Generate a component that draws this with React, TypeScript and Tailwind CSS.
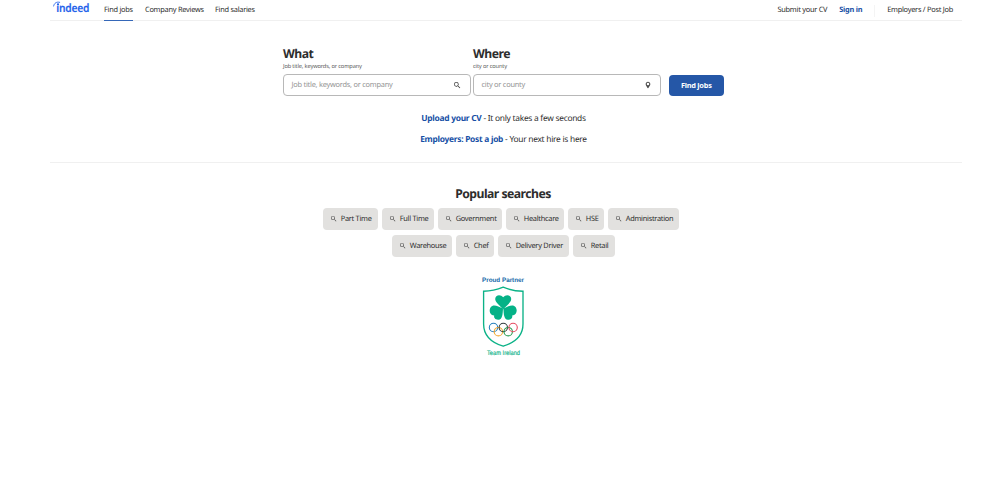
import React from "react";

function SearchIcon({ className }: { className: string }) {
  return (
    <svg viewBox="0 0 24 24" className={className} fill="currentColor" aria-hidden="true">
      <path d="M15.5 14h-.79l-.28-.27A6.47 6.47 0 0 0 16 9.5 6.5 6.5 0 1 0 9.5 16c1.61 0 3.09-.59 4.23-1.57l.27.28v.79l5 4.99L20.49 19zm-6 0C7.01 14 5 11.99 5 9.5S7.01 5 9.5 5 14 7.01 14 9.5 11.99 14 9.5 14" />
    </svg>
  );
}

function PinIcon() {
  return (
    <svg viewBox="0 0 24 24" className="size-[8px] text-[#4d4d4d]" fill="currentColor" aria-hidden="true">
      <path fillRule="evenodd" d="M12 2C8 2 5 5 5 9c0 5 7 13 7 13s7-8 7-13c0-4-3-7-7-7m0 3.2a3.800 3.800 0 1 1 0 7.600a3.800 3.800 0 0 1 0-7.600" />
    </svg>
  );
}

function Logo() {
  return (
    <svg viewBox="0 0 40 18" className="h-[18px] w-[40px] overflow-visible" role="img" aria-label="indeed">
      <path d="M.6 6C1.200 3.200 3.500 1.400 6.700 2.300" fill="none" stroke="#2563eb" strokeWidth="0.900" strokeLinecap="round" />
      <circle cx="5" cy="4.300" r="1.150" fill="#2563eb" />
      <text x="3.300" y="12.400" fontFamily="'Noto Sans', sans-serif" fontWeight="600" fontSize="11.400" textLength="32.800" lengthAdjust="spacingAndGlyphs" fill="#2563eb" stroke="#2563eb" strokeWidth="0.150">ındeed</text>
    </svg>
  );
}

function PartnerBadge() {
  return (
    <svg viewBox="0 0 66 92" className="h-[92px] w-[66px]" role="img" aria-label="Proud Partner Team Ireland">
      <text x="12" y="12" fontFamily="'Liberation Sans', sans-serif" fontWeight="700" fontSize="6.400" textLength="42" lengthAdjust="spacingAndGlyphs" fill="#1268a8">Proud Partner</text>
      <path d="M33.200 17.200C27 19.800 20 21.200 13.600 21.200V54C13.600 65 21 72.500 33.200 76.200C45.400 72.500 53 65 53 54V21.200C46.500 21.200 39.500 19.800 33.200 17.200Z" fill="white" stroke="#0bb287" strokeWidth="1.350" />
      <g fill="#05b287">
        <path d="M33.200 39.500C30 35.500 25.200 32.500 25.200 29C25.200 24.600 30.800 24 33.200 27.300C35.600 24 41.200 24.600 41.200 29C41.200 32.500 36.400 35.500 33.200 39.500Z" />
        <path d="M33 38.500C32.700 44 32.500 49.500 28.500 49.800C25.200 50 23.600 47.700 24.200 45.600C20.200 45.400 18.400 40.800 20.700 37.300C23.300 33.600 28 36.200 33 38.500Z" />
        <path d="M33.400 38.500C33.700 44 33.900 49.500 37.900 49.800C41.200 50 42.800 47.700 42.200 45.600C46.200 45.400 48 40.800 45.700 37.300C43.100 33.600 38.400 36.200 33.400 38.500Z" />
      </g>
      <g fill="none" strokeWidth="1.100">
        <circle cx="23.500" cy="57.500" r="4.200" stroke="#247fbd" />
        <circle cx="28.400" cy="61.700" r="4.200" stroke="#f3aa36" />
        <circle cx="33.300" cy="57.500" r="4.200" stroke="#333b3c" />
        <circle cx="38.200" cy="61.700" r="4.200" stroke="#249b50" />
        <circle cx="43.100" cy="57.500" r="4.200" stroke="#e64c62" />
      </g>
      <text x="17" y="84.500" fontFamily="'Liberation Sans', sans-serif" fontSize="6.600" textLength="33" lengthAdjust="spacingAndGlyphs" fill="#0bb287" stroke="#0bb287" strokeWidth="0.150">Team Ireland</text>
    </svg>
  );
}

const firstRow = [
  { label: "Part Time", width: "w-[55px]" },
  { label: "Full Time", width: "w-[52px]" },
  { label: "Government", width: "w-[64px]" },
  { label: "Healthcare", width: "w-[58px]" },
  { label: "HSE", width: "w-[36px]" },
  { label: "Administration", width: "w-[71px]" },
];

const secondRow = [
  { label: "Warehouse", width: "w-[60px]" },
  { label: "Chef", width: "w-[38px]" },
  { label: "Delivery Driver", width: "w-[71px]" },
  { label: "Retail", width: "w-[42px]" },
];

function Chips({ items, className }: { items: typeof firstRow; className: string }) {
  return (
    <div className={`flex gap-[4px] ${className}`}>
      {items.map(({ label, width }) => (
        <a key={label} className={`flex h-[21.500px] shrink-0 items-center rounded-[4px] bg-[#e2e1df] pl-[7px] whitespace-nowrap ${width}`}>
          <SearchIcon className="size-[7.500px] shrink-0 text-[#444]" />
          <span className="ml-[3.200px] text-[7.400px] leading-[10px] tracking-[-0.270px]">{label}</span>
        </a>
      ))}
    </div>
  );
}

function Field({ label, hint, children }: { label: string; hint: string; children: React.ReactNode }) {
  return (
    <label className="block w-[188px]">
      <span className="block pt-px text-[12.200px] leading-[16px] font-bold tracking-[-0.500px]">{label}</span>
      <span className="block text-[5.700px] leading-[8px] tracking-[-0.150px] text-[#595959]">{hint}</span>
      <span className="mt-[4px] flex h-[22px] items-center justify-between rounded-[4px] border border-[#b8b8b8] pr-[8.500px] pl-[7.500px] text-[7.400px] tracking-[-0.240px] text-[#949494]">
        <span className="pt-px">{hint}</span>
        {children}
      </span>
    </label>
  );
}

export default function App() {
  return (
    <div className="h-[500px] w-[1000px] overflow-hidden bg-white font-['Noto_Sans',sans-serif] text-[#2d2d2d] [text-rendering:geometricPrecision]">
      <header className="ml-[50px] flex h-[21px] w-[912px] items-start border-b border-[#f0f0f0] pl-[3px] text-[7.400px] leading-[10px] tracking-[-0.260px] whitespace-nowrap">
        <Logo />
        <nav className="ml-[11px] flex">
          <a className="mr-[12px] h-[21px] w-[29px] border-b border-[#3567b8] pt-[5px]">Find jobs</a>
          <a className="w-[70px] pt-[4.500px]">Company Reviews</a>
          <a className="pt-[4.500px]">Find salaries</a>
        </nav>
        <div className="mr-[9px] ml-auto flex pt-[4.500px]">
          <a>Submit your CV</a>
          <a className="ml-[12px] font-bold text-[#164fa5]">Sign in</a>
          <span className="ml-[12px] h-[12px] w-px bg-[#f4f4f4]" />
          <a className="ml-[12px]">Employers / Post Job</a>
        </div>
      </header>
      <main>
        <section className="ml-[50px] h-[142px] w-[912px] border-b border-[#f0f0f0] pt-[24px]">
          <form className="ml-[233px] flex items-end">
            <Field label="What" hint="Job title, keywords, or company">
              <SearchIcon className="size-[8.500px] text-[#333]" />
            </Field>
            <div className="ml-[2px]">
              <Field label="Where" hint="city or county"><PinIcon /></Field>
            </div>
            <button type="button" className="ml-[7.500px] h-[21px] w-[55.500px] rounded-[4px] bg-[#2557a7] pt-px text-[7.400px] font-bold tracking-[-0.240px] text-white">Find jobs</button>
          </form>
          <div className="mt-[17px] -ml-[5px] text-center text-[8.400px] leading-[11px] tracking-[-0.270px]">
            <p><a className="font-bold text-[#164fa5]">Upload your CV</a> - It only takes a few seconds</p>
            <p className="mt-[9.500px]"><a className="font-bold text-[#164fa5]">Employers: Post a job</a> - Your next hire is here</p>
          </div>
        </section>
        <section className="pt-[22.500px]">
          <h2 className="w-[1006px] text-center text-[12.200px] leading-[16px] font-bold tracking-[-0.520px]">Popular searches</h2>
          <Chips items={firstRow} className="mt-[6.500px] ml-[323px]" />
          <Chips items={secondRow} className="mt-[5.500px] ml-[392px]" />
          <div className="mt-[13px] ml-[470px]"><PartnerBadge /></div>
        </section>
      </main>
    </div>
  );
}
